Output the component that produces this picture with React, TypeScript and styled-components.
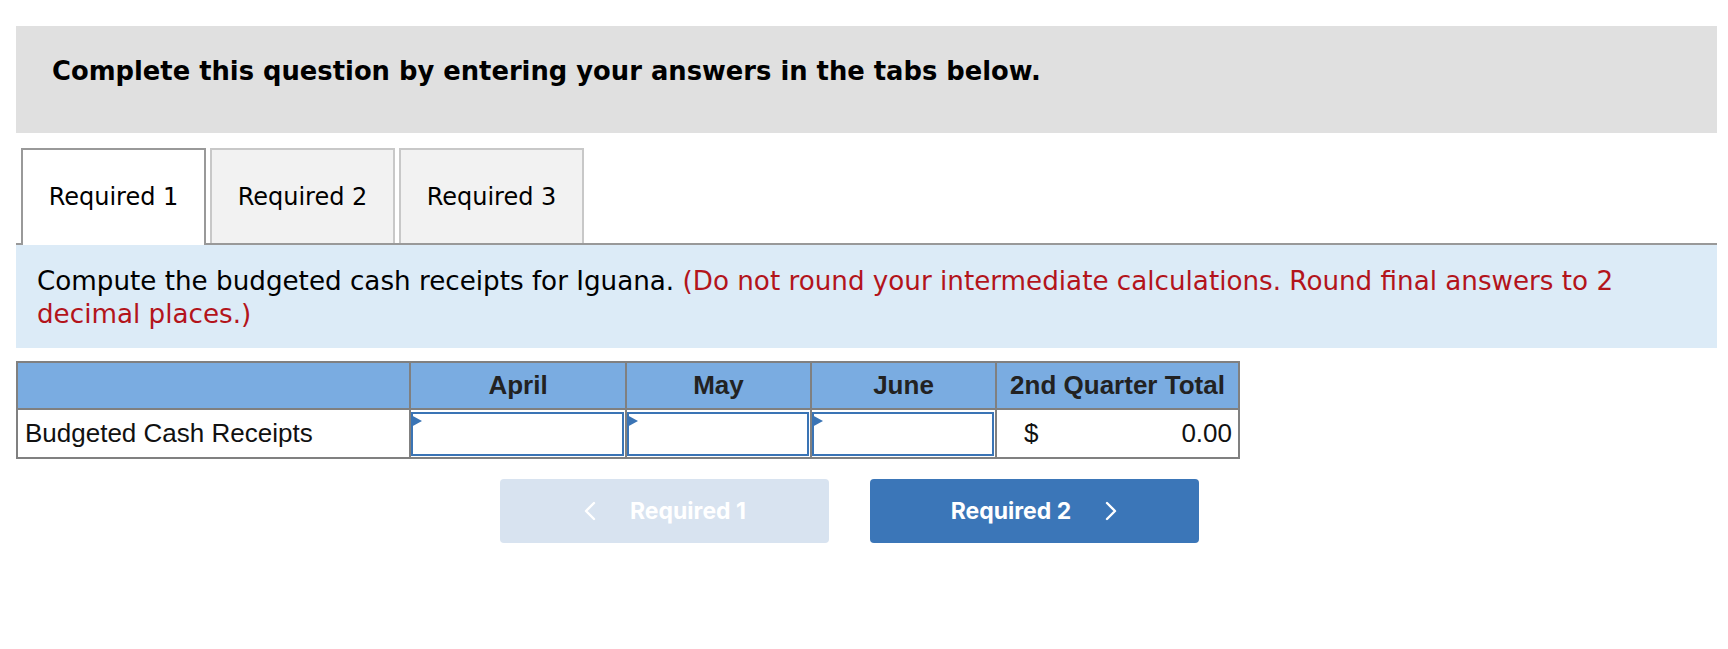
import React from 'react'
import styled, { createGlobalStyle } from 'styled-components'

const GlobalStyle = createGlobalStyle`
  body {
    margin: 0;
    background: #fff;
    color: #000;
    font-family: "DejaVu Sans", Verdana, sans-serif;
  }
`

const Page = styled.div`
  padding: 26px 11px 40px 16px;
`

const Banner = styled.div`
  box-sizing: border-box;
  height: 107px;
  padding: 30px 0 0 36px;
  background: #e0e0e0;
  font-size: 25.8px;
  line-height: 30px;
  font-weight: bold;
`

const TabStrip = styled.div`
  display: flex;
  align-items: flex-end;
  gap: 4px;
  margin-top: 15px;
  padding-left: 5px;
  border-bottom: 2px solid #999;
`

const Tab = styled.div<{ $active?: boolean }>`
  box-sizing: border-box;
  width: 185px;
  height: ${p => (p.$active ? '97px' : '95px')};
  margin-bottom: ${p => (p.$active ? '-2px' : '0')};
  padding-bottom: ${p => (p.$active ? '2px' : '0')};
  display: flex;
  align-items: center;
  justify-content: center;
  border: 2px solid ${p => (p.$active ? '#999' : '#c8c8c8')};
  border-bottom: none;
  background: ${p => (p.$active ? '#fff' : '#f2f2f2')};
  font-size: 24px;
  color: #000;
`

const Prompt = styled.div`
  padding: 20px 20px 17px 21px;
  background: #dcebf7;
  font-size: 26.2px;
  line-height: 33px;
`

const Note = styled.span`
  color: #b3141b;
`

const Grid = styled.table`
  margin-top: 13px;
  border-collapse: collapse;
  table-layout: fixed;
  width: 1222px;
  font-family: "Liberation Sans", Arial, sans-serif;
  font-size: 26px;
  color: #222;

  th,
  td {
    border: 2px solid #808080;
    height: 45px;
  }
`

const HeadCell = styled.th`
  background: #7aace1;
  font-weight: bold;
  text-align: center;
  padding: 0;
`

const LabelCell = styled.td`
  padding: 0 0 0 7px;
  color: #111;
`

const EntryCell = styled.td`
  padding: 1px 1px 1px 0;
`

const Entry = styled.div`
  position: relative;
  box-sizing: border-box;
  height: 44px;
  border: 2px solid #3a74b5;
  background: #fff;

  &::before {
    content: '';
    position: absolute;
    left: -2px;
    top: 1px;
    border-top: 6px solid transparent;
    border-bottom: 6px solid transparent;
    border-left: 11px solid #3a74b5;
  }
`

const TotalCell = styled.td`
  padding: 0 6px 0 27px;
  color: #111;
`

const TotalInner = styled.div`
  display: flex;
  justify-content: space-between;
  align-items: center;
`

const Nav = styled.div`
  display: flex;
  gap: 41px;
  margin-top: 20px;
  padding-left: 484px;
`

const NavButton = styled.button<{ $muted?: boolean }>`
  width: 329px;
  height: 64px;
  border: none;
  border-radius: 4px;
  background: ${p => (p.$muted ? '#d8e3f0' : '#3b76b8')};
  color: #fff;
  font-family: Inter, "Liberation Sans", sans-serif;
  font-weight: 700;
  font-size: 23px;
  display: flex;
  align-items: center;
  justify-content: center;
  gap: 34px;
  cursor: ${p => (p.$muted ? 'default' : 'pointer')};
`

const Chevron = ({ dir }: { dir: 'left' | 'right' }) => (
  <svg width="13" height="20" viewBox="0 0 13 20" fill="none">
    <polyline
      points={dir === 'left' ? '11,2 3,10 11,18' : '2,2 10,10 2,18'}
      stroke="#fff"
      strokeWidth="2.4"
      strokeLinecap="round"
      strokeLinejoin="round"
    />
  </svg>
)

const months = ['April', 'May', 'June']

export default function App() {
  return (
    <Page>
      <GlobalStyle />
      <Banner>Complete this question by entering your answers in the tabs below.</Banner>

      <TabStrip>
        <Tab $active>Required 1</Tab>
        <Tab>Required 2</Tab>
        <Tab>Required 3</Tab>
      </TabStrip>

      <Prompt>
        Compute the budgeted cash receipts for Iguana.{' '}
        <Note>
          (Do not round your intermediate calculations. Round final answers to 2
          <br />
          decimal places.)
        </Note>
      </Prompt>

      <Grid>
        <colgroup>
          <col style={{ width: 393 }} />
          <col style={{ width: 216 }} />
          <col style={{ width: 185 }} />
          <col style={{ width: 185 }} />
          <col style={{ width: 243 }} />
        </colgroup>
        <thead>
          <tr>
            <HeadCell />
            {months.map(m => (
              <HeadCell key={m}>{m}</HeadCell>
            ))}
            <HeadCell>2nd Quarter Total</HeadCell>
          </tr>
        </thead>
        <tbody>
          <tr>
            <LabelCell>Budgeted Cash Receipts</LabelCell>
            {months.map(m => (
              <EntryCell key={m}>
                <Entry />
              </EntryCell>
            ))}
            <TotalCell>
              <TotalInner>
                <span>$</span>
                <span>0.00</span>
              </TotalInner>
            </TotalCell>
          </tr>
        </tbody>
      </Grid>

      <Nav>
        <NavButton $muted>
          <Chevron dir="left" />
          Required 1
        </NavButton>
        <NavButton>
          Required 2
          <Chevron dir="right" />
        </NavButton>
      </Nav>
    </Page>
  )
}
